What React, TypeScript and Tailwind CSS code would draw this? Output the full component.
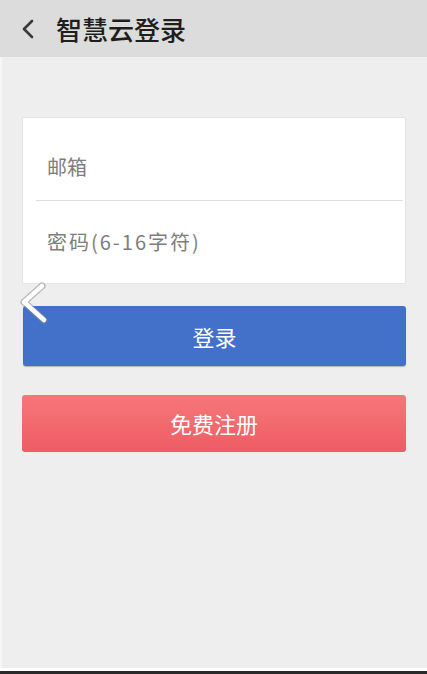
import React from "react";

export default function App() {
  const font = { fontFamily: '"Noto Sans CJK SC", "Noto Sans", sans-serif' };
  return (
    <div className="relative w-[427px] h-[674px] flex flex-col overflow-hidden bg-[#eeeeee]" style={font}>
      <div className="h-[57px] bg-[#dcdcdc] flex items-center shrink-0">
        <svg width="14" height="20" viewBox="0 0 14 20" className="ml-[21px]">
          <path d="M11 2 L3 10 L11 18" fill="none" stroke="#3a3a3a" strokeWidth="2.6" strokeLinecap="round" strokeLinejoin="round" />
        </svg>
        <span className="ml-[21px] text-[26px] font-medium text-[#1e1e1e] leading-none">智慧云登录</span>
      </div>
      <div className="flex-1 border-l-2 border-[#f6f6f6] flex flex-col pl-[20px] pr-[21px] pt-[60px]">
        <div className="bg-white border border-[#e3e3e3] rounded-[2px] flex flex-col">
          <div className="h-[82px] flex items-center pt-[16px] pl-[24px] text-[20px] text-[#7d7d7d]">邮箱</div>
          <div className="h-px bg-[#dedede] ml-[13px] mr-[2px]" />
          <div className="h-[82px] flex items-center pl-[24px] text-[20px] text-[#7d7d7d] tracking-[2px]">密码(6-16字符)</div>
        </div>
        <button className="mt-[22px] ml-px h-[60px] rounded-[3px] bg-[#4371c9] text-white text-[22px] flex items-center justify-center shadow-[0_1px_1px_rgba(0,0,0,0.25)]">
          登录
        </button>
        <button className="mt-[29px] h-[57px] rounded-[3px] bg-gradient-to-b from-[#f57779] to-[#ee5c64] text-white text-[22px] flex items-center justify-center">
          免费注册
        </button>
      </div>
      <div className="h-[3px] bg-white shrink-0" />
      <div className="h-[3px] bg-[#2a2a2a] shrink-0" />
      <svg width="34" height="46" viewBox="0 0 34 46" className="absolute left-[15px] top-[280px]">
        <path d="M27 6 L9 22 L29 40" fill="none" stroke="#8a8a8a" strokeWidth="7" strokeLinecap="round" strokeLinejoin="round" opacity="0.6" />
        <path d="M27 6 L9 22 L29 40" fill="none" stroke="#ffffff" strokeWidth="4.5" strokeLinecap="round" strokeLinejoin="round" />
      </svg>
    </div>
  );
}
